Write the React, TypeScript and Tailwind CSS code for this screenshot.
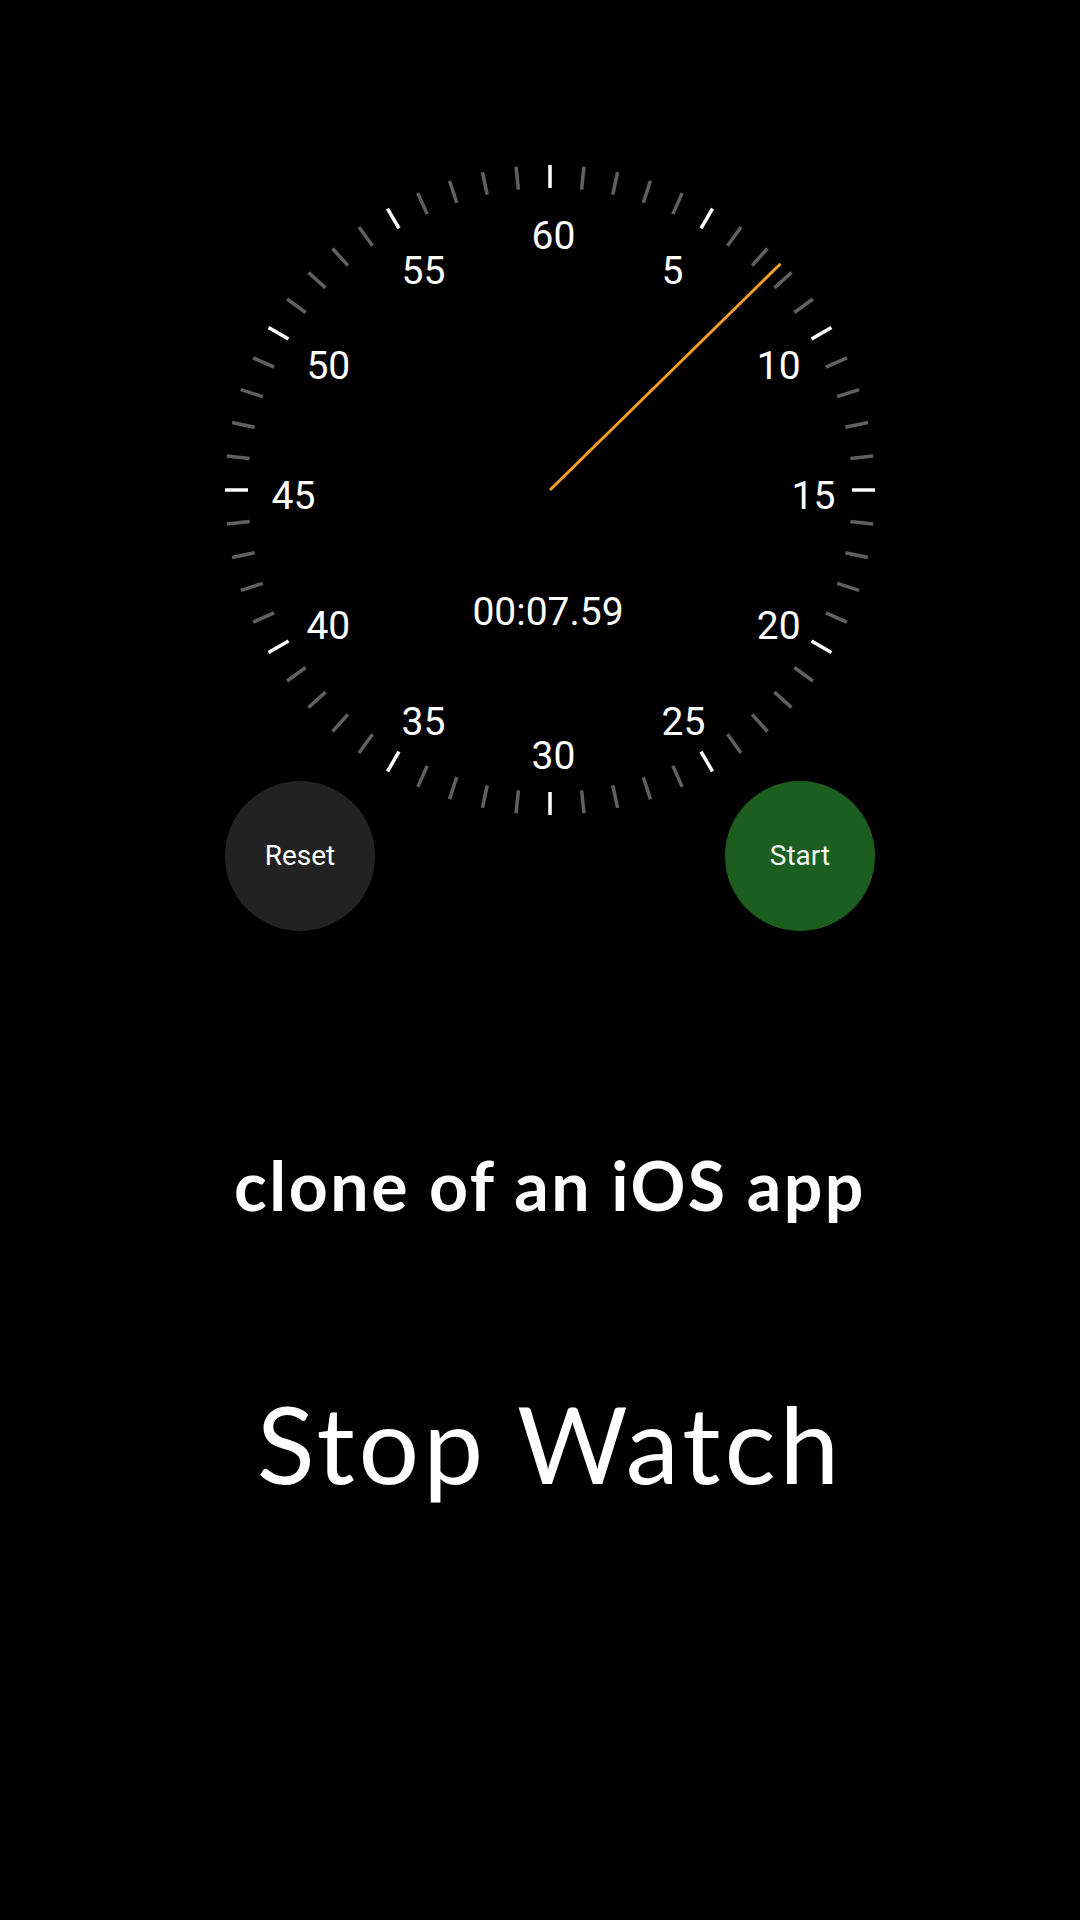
import React from 'react';

const SIZE = 650;
const C = SIZE / 2;

// label ring sits slightly off the tick ring in the original
const LABEL_CX = C + 3.5;
const LABEL_CY = C + 5.5;
const LABEL_R = 260;
const LABEL_FONT = 39;
const DIGIT_W = 0.5615 * LABEL_FONT;

const ticks = Array.from({ length: 60 }, (_, i) => i);
const labels = [60, 5, 10, 15, 20, 25, 30, 35, 40, 45, 50, 55];

const elapsed = 7.59;

const Dial: React.FC = () => {
  const handAngle = (elapsed / 60) * Math.PI * 2;
  const handLen = 323;

  return (
    <svg width={SIZE} height={SIZE} viewBox={`0 0 ${SIZE} ${SIZE}`} className="block">
      {ticks.map((i) => {
        const a = (i / 60) * Math.PI * 2;
        const sin = Math.sin(a);
        const cos = Math.cos(a);
        const outer = 325;
        const inner = 302;
        const major = i % 5 === 0;
        return (
          <line
            key={i}
            x1={C + outer * sin}
            y1={C - outer * cos}
            x2={C + inner * sin}
            y2={C - inner * cos}
            stroke={major ? '#ffffff' : '#606060'}
            strokeWidth={3.5}
          />
        );
      })}

      {labels.map((n, idx) => {
        const a = (idx / 12) * Math.PI * 2;
        const x = LABEL_CX + LABEL_R * Math.sin(a) - DIGIT_W;
        const y = LABEL_CY - LABEL_R * Math.cos(a) + 13.9;
        return (
          <text
            key={n}
            x={x}
            y={y}
            fill="#ffffff"
            fontSize={LABEL_FONT}
            fontFamily="Roboto, 'Liberation Sans', sans-serif"
          >
            {n}
          </text>
        );
      })}

      <line
        x1={C}
        y1={C}
        x2={C + handLen * Math.sin(handAngle)}
        y2={C - handLen * Math.cos(handAngle)}
        stroke="#f5a020"
        strokeWidth={3}
      />

      <text
        x={C - 2}
        y={C + 135}
        fill="#ffffff"
        fontSize={39}
        textAnchor="middle"
        fontFamily="Roboto, 'Liberation Sans', sans-serif"
      >
        00:07.59
      </text>
    </svg>
  );
};

export default function App() {
  return (
    <div className="min-h-[1920px] w-full bg-black flex flex-col items-center pt-[165px] pl-[20px] font-['Roboto',_'Liberation_Sans',_sans-serif]">
      <Dial />

      <div className="w-[650px] flex justify-between -mt-[34px]">
        <button className="w-[150px] h-[150px] rounded-full bg-[#222222] text-white text-[28px] flex items-center justify-center">
          Reset
        </button>
        <button className="w-[150px] h-[150px] rounded-full bg-[#1b5e20] text-[#f1f5f1] text-[28px] flex items-center justify-center">
          Start
        </button>
      </div>

      <h2 className="mt-[220px] text-white text-[68px] leading-none font-bold tracking-[2.5px] font-['Lato',_sans-serif]">
        clone of an iOS app
      </h2>

      <h1 className="mt-[170px] text-white text-[107px] leading-none tracking-[4px] font-['Lato',_sans-serif]">
        Stop Watch
      </h1>
    </div>
  );
}
